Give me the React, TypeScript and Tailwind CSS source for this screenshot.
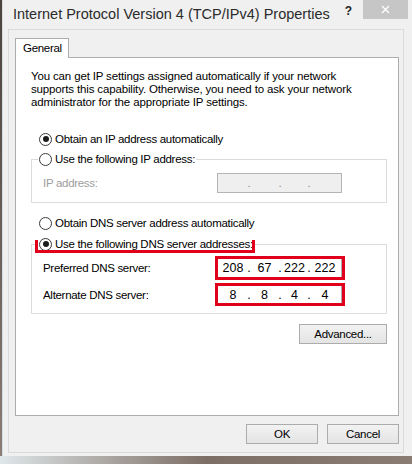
import React from "react";

const dlgFont = "[font-family:'Liberation_Sans',Arial,sans-serif] text-[11.5px] tracking-[-0.3px]";

function Radio({ checked }: { checked?: boolean }) {
  return (
    <span className="w-[13px] h-[13px] rounded-full border border-[#3a3a3a] bg-white flex items-center justify-center shrink-0">
      {checked && <span className="w-[6px] h-[6px] rounded-full bg-[#1c1c1c]" />}
    </span>
  );
}

function RadioRow({ checked, label }: { checked?: boolean; label: string }) {
  return (
    <span className="flex items-center gap-[3px] h-[14px] leading-[14px] text-black whitespace-nowrap">
      <Radio checked={checked} />
      <span>{label}</span>
    </span>
  );
}

function IpField({ values, disabled }: { values: string[]; disabled?: boolean }) {
  const widths = ["w-[30px]", "w-[29px]", "w-[27px]", "w-[30px]"];
  return (
    <div
      className={
        "w-[125px] h-[20px] border flex items-center tracking-normal " +
        (disabled ? "bg-[#efefef] border-[#b4b4b4] text-[#8a8a8a]" : "bg-white border-[#abadb3] text-black text-[12.5px]")
      }
    >
      {values.map((v, i) => (
        <React.Fragment key={i}>
          <span className={widths[i] + " text-center leading-[18px]"}>{v}</span>
          {i < 3 && <span className="w-[2px] flex justify-center leading-[18px]">.</span>}
        </React.Fragment>
      ))}
    </div>
  );
}

function Button({ children, w }: { children: React.ReactNode; w: string }) {
  return (
    <div
      className={
        w +
        " h-[20px] border border-[#acacac] bg-gradient-to-b from-[#f2f2f2] to-[#e4e4e4] flex items-center justify-center text-black leading-[18px]"
      }
    >
      {children}
    </div>
  );
}

export default function App() {
  return (
    <div className="w-[412px] h-[464px] overflow-hidden flex flex-col bg-[#6b5f57]">
      <div className="flex h-[456px]">
        <div className="w-[2px] h-full bg-gradient-to-b from-[#4b433e] to-[#8a7d74]" />
        <div className="flex-1 h-full bg-[#f0f0f0] border-l border-[#d6dde2] flex flex-col">
          {/* Title bar */}
          <div className="h-[29px] flex items-start">
            <span className="pl-[10px] pt-[4px] text-[14.5px] leading-[20px] text-[#2b2b2b] whitespace-nowrap [font-family:'Liberation_Sans',sans-serif]">
              Internet Protocol Version 4 (TCP/IPv4) Properties
            </span>
            <span className="flex-1" />
            <span className="pt-[4px] mr-[11px] text-[12px] leading-[14px] font-bold text-[#222] [font-family:'Liberation_Sans',sans-serif]">
              ?
            </span>
            <div className="w-[45px] h-[19px] bg-[#c6c6c6] flex items-center justify-center mr-[4px]">
              <svg width="9" height="9" viewBox="0 0 9 9">
                <path d="M1 1L8 8M8 1L1 8" stroke="#ffffff" strokeWidth="1.3" />
              </svg>
            </div>
          </div>

          {/* Client frame */}
          <div className={"ml-[5px] w-[396px] h-[424px] border border-[#dadada] flex flex-col pl-[6px] pt-[8px] " + dlgFont}>
            {/* Tab */}
            <div className="w-[54px] h-[20px] -mb-px relative z-10 bg-white border border-b-0 border-[#adadad] pl-[7px] leading-[19px] text-black">
              General
            </div>
            {/* Panel */}
            <div className="w-[384px] h-[359px] border border-[#adadad] bg-white flex flex-col">
              <p className="pl-[15px] pt-[12px] leading-[13px] text-black whitespace-nowrap tracking-[-0.15px]">
                You can get IP settings assigned automatically if your network
                <br />
                supports this capability. Otherwise, you need to ask your network
                <br />
                administrator for the appropriate IP settings.
              </p>

              <div className="mt-[23px] pl-[23px]">
                <RadioRow checked label="Obtain an IP address automatically" />
              </div>

              <fieldset className="mt-[6px] ml-[15px] w-[356px] border border-[#dcdcdc] pb-[9px]">
                <legend className="ml-[6px] px-[1px] bg-white">
                  <RadioRow label="Use the following IP address:" />
                </legend>
                <div className="flex items-center pt-[7px] pl-[11px]">
                  <span className="w-[174px] text-[#9d9d9d] leading-[20px]">IP address:</span>
                  <IpField disabled values={["", "", "", ""]} />
                </div>
              </fieldset>

              <div className="mt-[13px] pl-[23px]">
                <RadioRow label="Obtain DNS server address automatically" />
              </div>

              <fieldset className="mt-[7px] ml-[15px] w-[356px] border border-[#dcdcdc] pb-[8px]">
                <legend className="ml-[6px] px-[1px] bg-white relative">
                  <RadioRow checked label="Use the following DNS server addresses:" />
                  <span className="absolute left-[-3px] right-[-1px] top-[3px] h-[13px] border-[3px] border-t-0 border-[#e0001b] pointer-events-none" />
                </legend>
                <div className="flex items-center pt-[7px] pl-[11px]">
                  <span className="w-[174px] leading-[20px] text-black">Preferred DNS server:</span>
                  <div className="relative">
                    <IpField values={["208", "67", "222", "222"]} />
                    <span className="absolute -left-[2px] -right-[3px] -top-[2px] -bottom-[2px] border-[3px] border-[#e0001b] pointer-events-none" />
                  </div>
                </div>
                <div className="flex items-center mt-[7px] pl-[11px]">
                  <span className="w-[174px] leading-[20px] text-black">Alternate DNS server:</span>
                  <div className="relative">
                    <IpField values={["8", "8", "4", "4"]} />
                    <span className="absolute -left-[2px] -right-[3px] -top-[2px] -bottom-[1px] border-[3px] border-[#e0001b] pointer-events-none" />
                  </div>
                </div>
              </fieldset>

              <div className="mt-[10px] ml-[15px] w-[356px] flex justify-end">
                <Button w="w-[88px]">Advanced...</Button>
              </div>
            </div>

            {/* Bottom buttons */}
            <div className="mt-[8px] w-[384px] flex justify-end gap-[9px]">
              <Button w="w-[72px]">OK</Button>
              <Button w="w-[72px]">Cancel</Button>
            </div>
          </div>
        </div>
      </div>
      <div className="h-[8px] bg-gradient-to-r from-[#dfe7ea] via-[#7d6f66] to-[#8a7c72]" />
    </div>
  );
}
